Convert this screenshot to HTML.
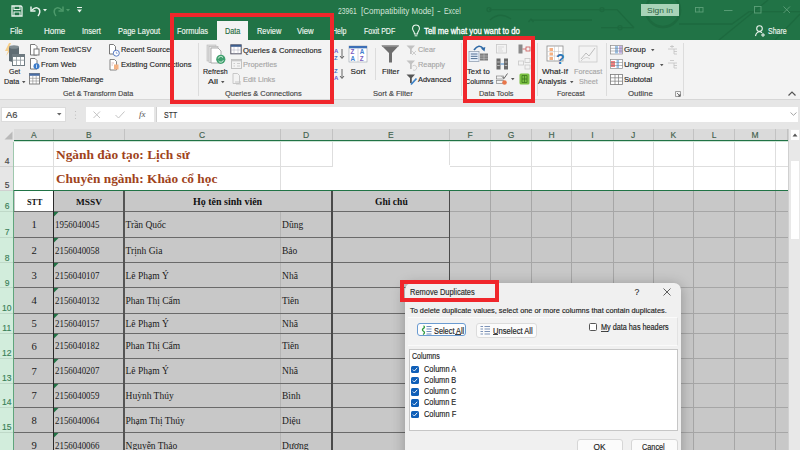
<!DOCTYPE html>
<html><head><meta charset="utf-8"><style>
html,body{margin:0;padding:0;width:800px;height:450px;overflow:hidden;background:#fff;position:relative}
</style></head><body>
<div style="position:absolute;left:0px;top:0px;width:800px;height:40px;background:#217346;"></div>
<svg style="position:absolute;left:0px;top:0px;overflow:visible" width="800" height="40" viewBox="0 0 800 40">
<g fill="none" stroke="#1d6a3f" stroke-width="1.3">
<path d="M489 9.6 H617 L634 27.7"/><circle cx="489" cy="9.6" r="2"/><circle cx="602" cy="9.6" r="2"/>
<path d="M490 20 Q500 11 511 19"/>
<path d="M531 20.2 H592"/><path d="M560 20 H592"/><path d="M528.5 22 L531 19 L533.5 22"/>
<path d="M601 27.7 H634"/><circle cx="620" cy="27.7" r="2"/>
<circle cx="663" cy="10" r="17" stroke-width="2.6"/>
<path d="M679 24 H732 L749 11.7 H800"/>
<path d="M719 40 L768 0"/><path d="M775 40 L800 14"/>
</g></svg>
<div style="position:absolute;left:217px;top:21px;width:31px;height:19px;background:#f3f3f3;"></div>
<div style="position:absolute;left:641px;top:4px;width:37.5px;height:12px;background:#a9d3b8;"></div>
<svg style="position:absolute;left:695px;top:7px;overflow:visible" width="9" height="6" viewBox="0 0 9 6"><rect x="0.5" y="0.5" width="7.5" height="4.5" fill="none" stroke="#5c9f79" stroke-width="0.9"/><path d="M4.2 0.5 V5" stroke="#5c9f79" stroke-width="0.8"/></svg>
<svg style="position:absolute;left:723.5px;top:9.5px;overflow:visible" width="9" height="2" viewBox="0 0 9 2"><path d="M0 0.5 H8.5" stroke="#5c9f79" stroke-width="0.9"/></svg>
<svg style="position:absolute;left:754px;top:6px;overflow:visible" width="8" height="8" viewBox="0 0 8 8"><rect x="0.5" y="0.5" width="6.5" height="6.5" fill="none" stroke="#5c9f79" stroke-width="0.9"/></svg>
<svg style="position:absolute;left:783px;top:6px;overflow:visible" width="8" height="8" viewBox="0 0 8 8"><path d="M0.5 0.5 L7 7 M7 0.5 L0.5 7" stroke="#5c9f79" stroke-width="0.9"/></svg>
<svg style="position:absolute;left:11px;top:5px;overflow:visible" width="12" height="12" viewBox="0 0 12 12"><path d="M1 1 H10 L11 2 V11 H1 Z" fill="none" stroke="#e8f3ec" stroke-width="1.3"/><path d="M3 1 V4.5 H9 V1" fill="none" stroke="#e8f3ec" stroke-width="1.1"/><path d="M3 11 V7 H9 V11" fill="none" stroke="#e8f3ec" stroke-width="1.1"/></svg>
<svg style="position:absolute;left:30px;top:5px;overflow:visible" width="12" height="12" viewBox="0 0 12 12"><path d="M2 5 Q6 1 9 4 Q11 7 8 11" fill="none" stroke="#e8f3ec" stroke-width="1.5"/><path d="M1 1.5 V6 H5.5" fill="none" stroke="#e8f3ec" stroke-width="1.5"/></svg>
<svg style="position:absolute;left:43px;top:9px;overflow:visible" width="4" height="3" viewBox="0 0 4 3"><path d="M0 0 H4 L2 2.5 Z" fill="#e8f3ec"/></svg>
<svg style="position:absolute;left:52px;top:5px;overflow:visible" width="12" height="12" viewBox="0 0 12 12"><path d="M10 5 Q6 1 3 4 Q1 7 4 11" fill="none" stroke="#4d9a6b" stroke-width="1.5"/><path d="M11 1.5 V6 H6.5" fill="none" stroke="#4d9a6b" stroke-width="1.5"/></svg>
<svg style="position:absolute;left:66px;top:9px;overflow:visible" width="4" height="3" viewBox="0 0 4 3"><path d="M0 0 H4 L2 2.5 Z" fill="#4d9a6b"/></svg>
<svg style="position:absolute;left:77px;top:7px;overflow:visible" width="5" height="6" viewBox="0 0 5 6"><path d="M0 0.5 H5" stroke="#e8f3ec" stroke-width="1"/><path d="M0 2.5 H5 L2.5 5.5 Z" fill="#e8f3ec"/></svg>
<svg style="position:absolute;left:411px;top:24px;overflow:visible" width="10" height="13" viewBox="0 0 10 13"><path d="M5 1 C1.5 1 0.8 4.5 2.3 6.8 C3.3 8.3 3.5 9 3.5 10 H6.5 C6.5 9 6.7 8.3 7.7 6.8 C9.2 4.5 8.5 1 5 1 Z" fill="none" stroke="#eef6f0" stroke-width="1.1"/><path d="M3.6 11.8 H6.4" stroke="#eef6f0" stroke-width="1"/></svg>
<svg style="position:absolute;left:755px;top:25px;overflow:visible" width="10" height="12" viewBox="0 0 10 12"><circle cx="4.5" cy="3.6" r="2.8" fill="none" stroke="#eef6f0" stroke-width="1.1"/><path d="M0.5 11 Q1.5 6.8 4.5 6.8 Q6 6.8 7 7.8" fill="none" stroke="#eef6f0" stroke-width="1.1"/><path d="M8 8 V12 M6 10 H10" stroke="#eef6f0" stroke-width="1"/></svg>
<div style="position:absolute;left:0px;top:40px;width:800px;height:59px;background:#f3f3f3;"></div>
<div style="position:absolute;left:0px;top:99px;width:800px;height:1px;background:#d6d6d6;"></div>
<div style="position:absolute;left:198px;top:43px;width:1px;height:53px;background:#dcdcdc;"></div>
<div style="position:absolute;left:330px;top:43px;width:1px;height:53px;background:#dcdcdc;"></div>
<div style="position:absolute;left:460.5px;top:43px;width:1px;height:53px;background:#dcdcdc;"></div>
<div style="position:absolute;left:537px;top:43px;width:1px;height:53px;background:#dcdcdc;"></div>
<div style="position:absolute;left:606.4px;top:43px;width:1px;height:53px;background:#dcdcdc;"></div>
<div style="position:absolute;left:682.6px;top:43px;width:1px;height:53px;background:#dcdcdc;"></div>
<div style="position:absolute;left:374.5px;top:48px;width:1px;height:32px;background:#dcdcdc;"></div>
<div style="position:absolute;left:0px;top:100px;width:800px;height:28.5px;background:#e6e6e6;"></div>
<div style="position:absolute;left:1px;top:106.8px;width:64.5px;height:15.2px;background:#ffffff;box-sizing:border-box;border:1px solid #dcdcdc"></div>
<div style="position:absolute;left:85.5px;top:106.8px;width:68.5px;height:15.2px;background:#ffffff;"></div>
<div style="position:absolute;left:156px;top:106.8px;width:641.7px;height:15.2px;background:#ffffff;box-sizing:border-box;border-left:1px solid #d0d0d0"></div>
<div style="position:absolute;left:0px;top:128.5px;width:787.5px;height:11.5px;background:#dadada;"></div>
<div style="position:absolute;left:0px;top:128.5px;width:14px;height:13.0px;background:#e6e6e6;"></div>
<div style="position:absolute;left:0px;top:141.5px;width:13.5px;height:24.5px;background:#e6e6e6;"></div>
<div style="position:absolute;left:0px;top:166px;width:13.5px;height:24px;background:#e6e6e6;"></div>
<div style="position:absolute;left:0px;top:190px;width:13.5px;height:21px;background:#d2eddc;"></div>
<div style="position:absolute;left:0px;top:211px;width:13.5px;height:26px;background:#d2eddc;"></div>
<div style="position:absolute;left:0px;top:237px;width:13.5px;height:25.5px;background:#d2eddc;"></div>
<div style="position:absolute;left:0px;top:262.5px;width:13.5px;height:25.0px;background:#d2eddc;"></div>
<div style="position:absolute;left:0px;top:287.5px;width:13.5px;height:25.5px;background:#d2eddc;"></div>
<div style="position:absolute;left:0px;top:313px;width:13.5px;height:20px;background:#d2eddc;"></div>
<div style="position:absolute;left:0px;top:333px;width:13.5px;height:25px;background:#d2eddc;"></div>
<div style="position:absolute;left:0px;top:358px;width:13.5px;height:25px;background:#d2eddc;"></div>
<div style="position:absolute;left:0px;top:383px;width:13.5px;height:24.30000000000001px;background:#d2eddc;"></div>
<div style="position:absolute;left:0px;top:407.3px;width:13.5px;height:25.0px;background:#d2eddc;"></div>
<div style="position:absolute;left:0px;top:432.3px;width:13.5px;height:25.19999999999999px;background:#d2eddc;"></div>
<div style="position:absolute;left:14px;top:141.5px;width:773.5px;height:48.5px;background:#ffffff;"></div>
<div style="position:absolute;left:14px;top:190px;width:773.5px;height:260px;background:#c8c8c8;"></div>
<div style="position:absolute;left:14.5px;top:190.5px;width:39px;height:20.5px;background:#ffffff;"></div>
<div style="position:absolute;left:787.5px;top:128.5px;width:12.5px;height:321.5px;background:#e8e8e8;"></div>
<div style="position:absolute;left:337.96px;top:8.29px;line-height:8.2px;white-space:nowrap;font-family:'Liberation Sans', sans-serif;font-size:8.2px;font-weight:400;color:#d2e4d8;transform:scaleX(0.8196);transform-origin:0 0;-webkit-text-stroke:0.15px currentColor;-webkit-text-stroke:0">23961</div>
<div style="position:absolute;left:360.90px;top:8.29px;line-height:8.2px;white-space:nowrap;font-family:'Liberation Sans', sans-serif;font-size:8.2px;font-weight:400;color:#d2e4d8;transform:scaleX(0.9816);transform-origin:0 0;-webkit-text-stroke:0.15px currentColor;-webkit-text-stroke:0">[Compatibility Mode]</div>
<div style="position:absolute;left:437.24px;top:8.29px;line-height:8.2px;white-space:nowrap;font-family:'Liberation Sans', sans-serif;font-size:8.2px;font-weight:400;color:#d2e4d8;transform:scaleX(1.3581);transform-origin:0 0;-webkit-text-stroke:0.15px currentColor;-webkit-text-stroke:0">-</div>
<div style="position:absolute;left:444.16px;top:8.29px;line-height:8.2px;white-space:nowrap;font-family:'Liberation Sans', sans-serif;font-size:8.2px;font-weight:400;color:#d2e4d8;transform:scaleX(0.8328);transform-origin:0 0;-webkit-text-stroke:0.15px currentColor;-webkit-text-stroke:0">Excel</div>
<div style="position:absolute;left:646.58px;top:6.54px;line-height:8.1px;white-space:nowrap;font-family:'Liberation Sans', sans-serif;font-size:8.1px;font-weight:400;color:#2a5f40;transform:scaleX(1.0443);transform-origin:0 0;-webkit-text-stroke:0.15px currentColor;-webkit-text-stroke:0">Sign in</div>
<div style="position:absolute;left:10.21px;top:28.29px;line-height:8.2px;white-space:nowrap;font-family:'Liberation Sans', sans-serif;font-size:8.2px;font-weight:400;color:#eef6f0;transform:scaleX(0.9448);transform-origin:0 0;-webkit-text-stroke:0.15px currentColor;">File</div>
<div style="position:absolute;left:44.40px;top:28.29px;line-height:8.2px;white-space:nowrap;font-family:'Liberation Sans', sans-serif;font-size:8.2px;font-weight:400;color:#eef6f0;transform:scaleX(0.9751);transform-origin:0 0;-webkit-text-stroke:0.15px currentColor;">Home</div>
<div style="position:absolute;left:82.12px;top:28.29px;line-height:8.2px;white-space:nowrap;font-family:'Liberation Sans', sans-serif;font-size:8.2px;font-weight:400;color:#eef6f0;transform:scaleX(0.9154);transform-origin:0 0;-webkit-text-stroke:0.15px currentColor;">Insert</div>
<div style="position:absolute;left:117.63px;top:28.29px;line-height:8.2px;white-space:nowrap;font-family:'Liberation Sans', sans-serif;font-size:8.2px;font-weight:400;color:#eef6f0;transform:scaleX(0.9144);transform-origin:0 0;-webkit-text-stroke:0.15px currentColor;">Page Layout</div>
<div style="position:absolute;left:176.63px;top:28.29px;line-height:8.2px;white-space:nowrap;font-family:'Liberation Sans', sans-serif;font-size:8.2px;font-weight:400;color:#eef6f0;transform:scaleX(0.9098);transform-origin:0 0;-webkit-text-stroke:0.15px currentColor;">Formulas</div>
<div style="position:absolute;left:224.64px;top:28.29px;line-height:8.2px;white-space:nowrap;font-family:'Liberation Sans', sans-serif;font-size:8.2px;font-weight:400;color:#1e6b40;transform:scaleX(0.8861);transform-origin:0 0;-webkit-text-stroke:0.15px currentColor;">Data</div>
<div style="position:absolute;left:256.63px;top:28.29px;line-height:8.2px;white-space:nowrap;font-family:'Liberation Sans', sans-serif;font-size:8.2px;font-weight:400;color:#eef6f0;transform:scaleX(0.9025);transform-origin:0 0;-webkit-text-stroke:0.15px currentColor;">Review</div>
<div style="position:absolute;left:297.11px;top:28.29px;line-height:8.2px;white-space:nowrap;font-family:'Liberation Sans', sans-serif;font-size:8.2px;font-weight:400;color:#eef6f0;transform:scaleX(0.9411);transform-origin:0 0;-webkit-text-stroke:0.15px currentColor;">View</div>
<div style="position:absolute;left:332.15px;top:28.29px;line-height:8.2px;white-space:nowrap;font-family:'Liberation Sans', sans-serif;font-size:8.2px;font-weight:400;color:#eef6f0;transform:scaleX(0.8612);transform-origin:0 0;-webkit-text-stroke:0.15px currentColor;">Help</div>
<div style="position:absolute;left:363.65px;top:28.29px;line-height:8.2px;white-space:nowrap;font-family:'Liberation Sans', sans-serif;font-size:8.2px;font-weight:400;color:#eef6f0;transform:scaleX(0.8571);transform-origin:0 0;-webkit-text-stroke:0.15px currentColor;">Foxit PDF</div>
<div style="position:absolute;left:423.61px;top:28.29px;line-height:8.2px;white-space:nowrap;font-family:'Liberation Sans', sans-serif;font-size:8.2px;font-weight:400;color:#ffffff;transform:scaleX(0.9480);transform-origin:0 0;-webkit-text-stroke:0.15px currentColor;-webkit-text-stroke:0.3px #fff">Tell me what you want to do</div>
<div style="position:absolute;left:767.65px;top:28.29px;line-height:8.2px;white-space:nowrap;font-family:'Liberation Sans', sans-serif;font-size:8.2px;font-weight:400;color:#eef6f0;transform:scaleX(0.8555);transform-origin:0 0;-webkit-text-stroke:0.15px currentColor;">Share</div>
<div style="position:absolute;left:62.64px;top:90.34px;line-height:8.1px;white-space:nowrap;font-family:'Liberation Sans', sans-serif;font-size:8.1px;font-weight:400;color:#444444;transform:scaleX(0.8921);transform-origin:0 0;-webkit-text-stroke:0.15px currentColor;">Get &amp; Transform Data</div>
<div style="position:absolute;left:224.63px;top:90.34px;line-height:8.1px;white-space:nowrap;font-family:'Liberation Sans', sans-serif;font-size:8.1px;font-weight:400;color:#444444;transform:scaleX(0.9221);transform-origin:0 0;-webkit-text-stroke:0.15px currentColor;">Queries &amp; Connections</div>
<div style="position:absolute;left:373.42px;top:90.34px;line-height:8.1px;white-space:nowrap;font-family:'Liberation Sans', sans-serif;font-size:8.1px;font-weight:400;color:#444444;transform:scaleX(0.9302);transform-origin:0 0;-webkit-text-stroke:0.15px currentColor;">Sort &amp; Filter</div>
<div style="position:absolute;left:479.23px;top:90.34px;line-height:8.1px;white-space:nowrap;font-family:'Liberation Sans', sans-serif;font-size:8.1px;font-weight:400;color:#444444;transform:scaleX(0.9066);transform-origin:0 0;-webkit-text-stroke:0.15px currentColor;">Data Tools</div>
<div style="position:absolute;left:556.84px;top:90.34px;line-height:8.1px;white-space:nowrap;font-family:'Liberation Sans', sans-serif;font-size:8.1px;font-weight:400;color:#444444;transform:scaleX(0.8798);transform-origin:0 0;-webkit-text-stroke:0.15px currentColor;">Forecast</div>
<div style="position:absolute;left:627.61px;top:90.34px;line-height:8.1px;white-space:nowrap;font-family:'Liberation Sans', sans-serif;font-size:8.1px;font-weight:400;color:#444444;transform:scaleX(0.9659);transform-origin:0 0;-webkit-text-stroke:0.15px currentColor;">Outline</div>
<div style="position:absolute;left:8.65px;top:67.84px;line-height:8.1px;white-space:nowrap;font-family:'Liberation Sans', sans-serif;font-size:8.1px;font-weight:400;color:#262626;transform:scaleX(0.8581);transform-origin:0 0;-webkit-text-stroke:0.15px currentColor;">Get</div>
<div style="position:absolute;left:4.14px;top:78.14px;line-height:8.1px;white-space:nowrap;font-family:'Liberation Sans', sans-serif;font-size:8.1px;font-weight:400;color:#262626;transform:scaleX(0.8896);transform-origin:0 0;-webkit-text-stroke:0.15px currentColor;">Data</div>
<div style="position:absolute;left:40.63px;top:46.34px;line-height:8.1px;white-space:nowrap;font-family:'Liberation Sans', sans-serif;font-size:8.1px;font-weight:400;color:#262626;transform:scaleX(0.9217);transform-origin:0 0;-webkit-text-stroke:0.15px currentColor;">From Text/CSV</div>
<div style="position:absolute;left:40.62px;top:61.05px;line-height:8.1px;white-space:nowrap;font-family:'Liberation Sans', sans-serif;font-size:8.1px;font-weight:400;color:#262626;transform:scaleX(0.9367);transform-origin:0 0;-webkit-text-stroke:0.15px currentColor;">From Web</div>
<div style="position:absolute;left:40.62px;top:75.55px;line-height:8.1px;white-space:nowrap;font-family:'Liberation Sans', sans-serif;font-size:8.1px;font-weight:400;color:#262626;transform:scaleX(0.9402);transform-origin:0 0;-webkit-text-stroke:0.15px currentColor;">From Table/Range</div>
<div style="position:absolute;left:120.63px;top:46.34px;line-height:8.1px;white-space:nowrap;font-family:'Liberation Sans', sans-serif;font-size:8.1px;font-weight:400;color:#262626;transform:scaleX(0.9158);transform-origin:0 0;-webkit-text-stroke:0.15px currentColor;">Recent Sources</div>
<div style="position:absolute;left:120.62px;top:61.05px;line-height:8.1px;white-space:nowrap;font-family:'Liberation Sans', sans-serif;font-size:8.1px;font-weight:400;color:#262626;transform:scaleX(0.9320);transform-origin:0 0;-webkit-text-stroke:0.15px currentColor;">Existing Connections</div>
<div style="position:absolute;left:202.65px;top:67.64px;line-height:8.1px;white-space:nowrap;font-family:'Liberation Sans', sans-serif;font-size:8.1px;font-weight:400;color:#262626;transform:scaleX(0.8717);transform-origin:0 0;-webkit-text-stroke:0.15px currentColor;">Refresh</div>
<div style="position:absolute;left:207.55px;top:78.14px;line-height:8.1px;white-space:nowrap;font-family:'Liberation Sans', sans-serif;font-size:8.1px;font-weight:400;color:#262626;transform:scaleX(1.0989);transform-origin:0 0;-webkit-text-stroke:0.15px currentColor;">All</div>
<div style="position:absolute;left:242.62px;top:46.64px;line-height:8.1px;white-space:nowrap;font-family:'Liberation Sans', sans-serif;font-size:8.1px;font-weight:400;color:#262626;transform:scaleX(0.9427);transform-origin:0 0;-webkit-text-stroke:0.15px currentColor;">Queries &amp; Connections</div>
<div style="position:absolute;left:242.63px;top:60.94px;line-height:8.1px;white-space:nowrap;font-family:'Liberation Sans', sans-serif;font-size:8.1px;font-weight:400;color:#a6a6a6;transform:scaleX(0.9229);transform-origin:0 0;-webkit-text-stroke:0.15px currentColor;">Properties</div>
<div style="position:absolute;left:242.63px;top:75.84px;line-height:8.1px;white-space:nowrap;font-family:'Liberation Sans', sans-serif;font-size:8.1px;font-weight:400;color:#a6a6a6;transform:scaleX(0.9188);transform-origin:0 0;-webkit-text-stroke:0.15px currentColor;">Edit Links</div>
<div style="position:absolute;left:350.60px;top:67.94px;line-height:8.1px;white-space:nowrap;font-family:'Liberation Sans', sans-serif;font-size:8.1px;font-weight:400;color:#262626;-webkit-text-stroke:0.15px currentColor;">Sort</div>
<div style="position:absolute;left:382.16px;top:67.94px;line-height:8.1px;white-space:nowrap;font-family:'Liberation Sans', sans-serif;font-size:8.1px;font-weight:400;color:#262626;transform:scaleX(0.9599);transform-origin:0 0;-webkit-text-stroke:0.15px currentColor;">Filter</div>
<div style="position:absolute;left:418.04px;top:46.34px;line-height:8.1px;white-space:nowrap;font-family:'Liberation Sans', sans-serif;font-size:8.1px;font-weight:400;color:#a6a6a6;transform:scaleX(0.8957);transform-origin:0 0;-webkit-text-stroke:0.15px currentColor;">Clear</div>
<div style="position:absolute;left:418.03px;top:61.44px;line-height:8.1px;white-space:nowrap;font-family:'Liberation Sans', sans-serif;font-size:8.1px;font-weight:400;color:#a6a6a6;transform:scaleX(0.9103);transform-origin:0 0;-webkit-text-stroke:0.15px currentColor;">Reapply</div>
<div style="position:absolute;left:418.03px;top:75.84px;line-height:8.1px;white-space:nowrap;font-family:'Liberation Sans', sans-serif;font-size:8.1px;font-weight:400;color:#262626;transform:scaleX(0.9207);transform-origin:0 0;-webkit-text-stroke:0.15px currentColor;">Advanced</div>
<div style="position:absolute;left:467.11px;top:67.64px;line-height:8.1px;white-space:nowrap;font-family:'Liberation Sans', sans-serif;font-size:8.1px;font-weight:400;color:#262626;transform:scaleX(0.9551);transform-origin:0 0;-webkit-text-stroke:0.15px currentColor;">Text to</div>
<div style="position:absolute;left:465.14px;top:78.14px;line-height:8.1px;white-space:nowrap;font-family:'Liberation Sans', sans-serif;font-size:8.1px;font-weight:400;color:#262626;transform:scaleX(0.8835);transform-origin:0 0;-webkit-text-stroke:0.15px currentColor;">Columns</div>
<div style="position:absolute;left:541.89px;top:67.64px;line-height:8.1px;white-space:nowrap;font-family:'Liberation Sans', sans-serif;font-size:8.1px;font-weight:400;color:#262626;-webkit-text-stroke:0.15px currentColor;">What-If</div>
<div style="position:absolute;left:538.42px;top:78.14px;line-height:8.1px;white-space:nowrap;font-family:'Liberation Sans', sans-serif;font-size:8.1px;font-weight:400;color:#262626;transform:scaleX(0.9376);transform-origin:0 0;-webkit-text-stroke:0.15px currentColor;">Analysis</div>
<div style="position:absolute;left:574.14px;top:67.64px;line-height:8.1px;white-space:nowrap;font-family:'Liberation Sans', sans-serif;font-size:8.1px;font-weight:400;color:#a6a6a6;transform:scaleX(0.8961);transform-origin:0 0;-webkit-text-stroke:0.15px currentColor;">Forecast</div>
<div style="position:absolute;left:579.14px;top:78.14px;line-height:8.1px;white-space:nowrap;font-family:'Liberation Sans', sans-serif;font-size:8.1px;font-weight:400;color:#a6a6a6;transform:scaleX(0.8847);transform-origin:0 0;-webkit-text-stroke:0.15px currentColor;">Sheet</div>
<div style="position:absolute;left:623.61px;top:46.34px;line-height:8.1px;white-space:nowrap;font-family:'Liberation Sans', sans-serif;font-size:8.1px;font-weight:400;color:#262626;transform:scaleX(0.9682);transform-origin:0 0;-webkit-text-stroke:0.15px currentColor;">Group</div>
<div style="position:absolute;left:623.60px;top:60.94px;line-height:8.1px;white-space:nowrap;font-family:'Liberation Sans', sans-serif;font-size:8.1px;font-weight:400;color:#262626;transform:scaleX(0.9817);transform-origin:0 0;-webkit-text-stroke:0.15px currentColor;">Ungroup</div>
<div style="position:absolute;left:623.62px;top:75.55px;line-height:8.1px;white-space:nowrap;font-family:'Liberation Sans', sans-serif;font-size:8.1px;font-weight:400;color:#262626;transform:scaleX(0.9483);transform-origin:0 0;-webkit-text-stroke:0.15px currentColor;">Subtotal</div>
<svg style="position:absolute;left:57px;top:113px;overflow:visible" width="5" height="3" viewBox="0 0 5 3"><path d="M0 0 H4.5 L2.25 2.6 Z" fill="#666"/></svg>
<svg style="position:absolute;left:74px;top:110px;overflow:visible" width="3" height="10" viewBox="0 0 3 10"><circle cx="1.5" cy="1.5" r="0.6" fill="#bbb"/><circle cx="1.5" cy="5" r="0.6" fill="#bbb"/><circle cx="1.5" cy="8.5" r="0.6" fill="#bbb"/></svg>
<svg style="position:absolute;left:93px;top:111px;overflow:visible" width="8" height="8" viewBox="0 0 8 8"><path d="M0.5 0.5 L7 7 M7 0.5 L0.5 7" stroke="#c4c4c4" stroke-width="1"/></svg>
<svg style="position:absolute;left:115px;top:111px;overflow:visible" width="10" height="8" viewBox="0 0 10 8"><path d="M0.5 4 L3.5 7 L9.5 0.5" stroke="#c4c4c4" stroke-width="1" fill="none"/></svg>
<svg style="position:absolute;left:790px;top:112px;overflow:visible" width="7" height="4" viewBox="0 0 7 4"><path d="M0.5 0.5 L3.5 3.3 L6.5 0.5" stroke="#9a9a9a" stroke-width="0.9" fill="none"/></svg>
<svg style="position:absolute;left:4px;top:131px;overflow:visible" width="9" height="9" viewBox="0 0 9 9"><path d="M8.5 0.5 V8.5 H0.5 Z" fill="#b9b9b9"/></svg>
<div style="position:absolute;left:53.0px;top:128.5px;width:1px;height:11.5px;background:#c2c2c2;"></div>
<div style="position:absolute;left:123.5px;top:128.5px;width:1px;height:11.5px;background:#c2c2c2;"></div>
<div style="position:absolute;left:279.75px;top:128.5px;width:1px;height:11.5px;background:#c2c2c2;"></div>
<div style="position:absolute;left:331.5px;top:128.5px;width:1px;height:11.5px;background:#c2c2c2;"></div>
<div style="position:absolute;left:449.0px;top:128.5px;width:1px;height:11.5px;background:#c2c2c2;"></div>
<div style="position:absolute;left:490.2px;top:128.5px;width:1px;height:11.5px;background:#c2c2c2;"></div>
<div style="position:absolute;left:530.7px;top:128.5px;width:1px;height:11.5px;background:#c2c2c2;"></div>
<div style="position:absolute;left:571.25px;top:128.5px;width:1px;height:11.5px;background:#c2c2c2;"></div>
<div style="position:absolute;left:612.5px;top:128.5px;width:1px;height:11.5px;background:#c2c2c2;"></div>
<div style="position:absolute;left:652.7px;top:128.5px;width:1px;height:11.5px;background:#c2c2c2;"></div>
<div style="position:absolute;left:693.2px;top:128.5px;width:1px;height:11.5px;background:#c2c2c2;"></div>
<div style="position:absolute;left:734.1px;top:128.5px;width:1px;height:11.5px;background:#c2c2c2;"></div>
<div style="position:absolute;left:775.0px;top:128.5px;width:1px;height:11.5px;background:#c2c2c2;"></div>
<div style="position:absolute;left:787.0px;top:128.5px;width:1px;height:11.5px;background:#c2c2c2;"></div>
<div style="position:absolute;left:14px;top:140px;width:773.5px;height:2px;background:#217346;"></div>
<div style="position:absolute;left:0px;top:165.5px;width:13.5px;height:1px;background:#d0d0d0;"></div>
<div style="position:absolute;left:0px;top:189.5px;width:13.5px;height:1px;background:#d0d0d0;"></div>
<div style="position:absolute;left:0px;top:210.5px;width:13.5px;height:1px;background:#bfd9c8;"></div>
<div style="position:absolute;left:0px;top:236.5px;width:13.5px;height:1px;background:#bfd9c8;"></div>
<div style="position:absolute;left:0px;top:262.0px;width:13.5px;height:1px;background:#bfd9c8;"></div>
<div style="position:absolute;left:0px;top:287.0px;width:13.5px;height:1px;background:#bfd9c8;"></div>
<div style="position:absolute;left:0px;top:312.5px;width:13.5px;height:1px;background:#bfd9c8;"></div>
<div style="position:absolute;left:0px;top:332.5px;width:13.5px;height:1px;background:#bfd9c8;"></div>
<div style="position:absolute;left:0px;top:357.5px;width:13.5px;height:1px;background:#bfd9c8;"></div>
<div style="position:absolute;left:0px;top:382.5px;width:13.5px;height:1px;background:#bfd9c8;"></div>
<div style="position:absolute;left:0px;top:406.8px;width:13.5px;height:1px;background:#bfd9c8;"></div>
<div style="position:absolute;left:0px;top:431.8px;width:13.5px;height:1px;background:#bfd9c8;"></div>
<div style="position:absolute;left:0px;top:457.0px;width:13.5px;height:1px;background:#bfd9c8;"></div>
<div style="position:absolute;left:13px;top:141.5px;width:1.3px;height:308.5px;background:#9fc8ae;"></div>
<div style="position:absolute;left:12.8px;top:190px;width:1.6px;height:260px;background:#5fa57c;"></div>
<div style="position:absolute;left:279.75px;top:141.5px;width:1px;height:48.5px;background:#dedede;"></div>
<div style="position:absolute;left:331.5px;top:141.5px;width:1px;height:48.5px;background:#dedede;"></div>
<div style="position:absolute;left:449.0px;top:141.5px;width:1px;height:48.5px;background:#dedede;"></div>
<div style="position:absolute;left:490.2px;top:141.5px;width:1px;height:48.5px;background:#dedede;"></div>
<div style="position:absolute;left:530.7px;top:141.5px;width:1px;height:48.5px;background:#dedede;"></div>
<div style="position:absolute;left:571.25px;top:141.5px;width:1px;height:48.5px;background:#dedede;"></div>
<div style="position:absolute;left:612.5px;top:141.5px;width:1px;height:48.5px;background:#dedede;"></div>
<div style="position:absolute;left:652.7px;top:141.5px;width:1px;height:48.5px;background:#dedede;"></div>
<div style="position:absolute;left:693.2px;top:141.5px;width:1px;height:48.5px;background:#dedede;"></div>
<div style="position:absolute;left:734.1px;top:141.5px;width:1px;height:48.5px;background:#dedede;"></div>
<div style="position:absolute;left:775.0px;top:141.5px;width:1px;height:48.5px;background:#dedede;"></div>
<div style="position:absolute;left:53px;top:141.5px;width:1px;height:48.5px;background:#dedede;"></div>
<div style="position:absolute;left:14px;top:165.5px;width:773.5px;height:1px;background:#dedede;"></div>
<div style="position:absolute;left:54px;top:142px;width:226px;height:23.5px;background:#ffffff;"></div>
<div style="position:absolute;left:54px;top:166.5px;width:226px;height:23.5px;background:#ffffff;"></div>
<div style="position:absolute;left:331px;top:166.5px;width:159px;height:23.5px;background:#ffffff;"></div>
<div style="position:absolute;left:332.5px;top:165px;width:117px;height:2px;background:#ffffff;"></div>
<div style="position:absolute;left:449.0px;top:190px;width:1px;height:260px;background:#a6a6a6;"></div>
<div style="position:absolute;left:490.2px;top:190px;width:1px;height:260px;background:#a6a6a6;"></div>
<div style="position:absolute;left:530.7px;top:190px;width:1px;height:260px;background:#a6a6a6;"></div>
<div style="position:absolute;left:571.25px;top:190px;width:1px;height:260px;background:#a6a6a6;"></div>
<div style="position:absolute;left:612.5px;top:190px;width:1px;height:260px;background:#a6a6a6;"></div>
<div style="position:absolute;left:652.7px;top:190px;width:1px;height:260px;background:#a6a6a6;"></div>
<div style="position:absolute;left:693.2px;top:190px;width:1px;height:260px;background:#a6a6a6;"></div>
<div style="position:absolute;left:734.1px;top:190px;width:1px;height:260px;background:#a6a6a6;"></div>
<div style="position:absolute;left:775.0px;top:190px;width:1px;height:260px;background:#a6a6a6;"></div>
<div style="position:absolute;left:449.5px;top:210.5px;width:338px;height:1px;background:#a6a6a6;"></div>
<div style="position:absolute;left:449.5px;top:236.5px;width:338px;height:1px;background:#a6a6a6;"></div>
<div style="position:absolute;left:449.5px;top:262.0px;width:338px;height:1px;background:#a6a6a6;"></div>
<div style="position:absolute;left:449.5px;top:287.0px;width:338px;height:1px;background:#a6a6a6;"></div>
<div style="position:absolute;left:449.5px;top:312.5px;width:338px;height:1px;background:#a6a6a6;"></div>
<div style="position:absolute;left:449.5px;top:332.5px;width:338px;height:1px;background:#a6a6a6;"></div>
<div style="position:absolute;left:449.5px;top:357.5px;width:338px;height:1px;background:#a6a6a6;"></div>
<div style="position:absolute;left:449.5px;top:382.5px;width:338px;height:1px;background:#a6a6a6;"></div>
<div style="position:absolute;left:449.5px;top:406.8px;width:338px;height:1px;background:#a6a6a6;"></div>
<div style="position:absolute;left:449.5px;top:431.8px;width:338px;height:1px;background:#a6a6a6;"></div>
<div style="position:absolute;left:280px;top:211px;width:0.8px;height:240px;background:#b4b4b4;"></div>
<div style="position:absolute;left:14px;top:210.5px;width:436px;height:1px;background:#6a6a6a;"></div>
<div style="position:absolute;left:14px;top:236.5px;width:436px;height:1px;background:#6a6a6a;"></div>
<div style="position:absolute;left:14px;top:262.0px;width:436px;height:1px;background:#6a6a6a;"></div>
<div style="position:absolute;left:14px;top:287.0px;width:436px;height:1px;background:#6a6a6a;"></div>
<div style="position:absolute;left:14px;top:312.5px;width:436px;height:1px;background:#6a6a6a;"></div>
<div style="position:absolute;left:14px;top:332.5px;width:436px;height:1px;background:#6a6a6a;"></div>
<div style="position:absolute;left:14px;top:357.5px;width:436px;height:1px;background:#6a6a6a;"></div>
<div style="position:absolute;left:14px;top:382.5px;width:436px;height:1px;background:#6a6a6a;"></div>
<div style="position:absolute;left:14px;top:406.8px;width:436px;height:1px;background:#6a6a6a;"></div>
<div style="position:absolute;left:14px;top:431.8px;width:436px;height:1px;background:#6a6a6a;"></div>
<div style="position:absolute;left:52.9px;top:190px;width:1.4px;height:260px;background:#2a2a2a;"></div>
<div style="position:absolute;left:123.4px;top:190px;width:1.2px;height:260px;background:#555;"></div>
<div style="position:absolute;left:331.4px;top:190px;width:1.6px;height:260px;background:#4a4a4a;"></div>
<div style="position:absolute;left:448.9px;top:190px;width:1.4px;height:260px;background:#4a4a4a;"></div>
<div style="position:absolute;left:14px;top:189.5px;width:773.5px;height:1.6px;background:#217346;"></div>
<div style="position:absolute;left:14px;top:141px;width:773.5px;height:1px;background:#cfe4d6;"></div>
<svg style="position:absolute;left:54px;top:211.5px;overflow:visible" width="5" height="5" viewBox="0 0 5 5"><path d="M0 0 H4.5 L0 4.5 Z" fill="#217346"/></svg>
<svg style="position:absolute;left:54px;top:237.5px;overflow:visible" width="5" height="5" viewBox="0 0 5 5"><path d="M0 0 H4.5 L0 4.5 Z" fill="#217346"/></svg>
<svg style="position:absolute;left:54px;top:263.0px;overflow:visible" width="5" height="5" viewBox="0 0 5 5"><path d="M0 0 H4.5 L0 4.5 Z" fill="#217346"/></svg>
<svg style="position:absolute;left:54px;top:288.0px;overflow:visible" width="5" height="5" viewBox="0 0 5 5"><path d="M0 0 H4.5 L0 4.5 Z" fill="#217346"/></svg>
<svg style="position:absolute;left:54px;top:313.5px;overflow:visible" width="5" height="5" viewBox="0 0 5 5"><path d="M0 0 H4.5 L0 4.5 Z" fill="#217346"/></svg>
<svg style="position:absolute;left:54px;top:333.5px;overflow:visible" width="5" height="5" viewBox="0 0 5 5"><path d="M0 0 H4.5 L0 4.5 Z" fill="#217346"/></svg>
<svg style="position:absolute;left:54px;top:358.5px;overflow:visible" width="5" height="5" viewBox="0 0 5 5"><path d="M0 0 H4.5 L0 4.5 Z" fill="#217346"/></svg>
<svg style="position:absolute;left:54px;top:383.5px;overflow:visible" width="5" height="5" viewBox="0 0 5 5"><path d="M0 0 H4.5 L0 4.5 Z" fill="#217346"/></svg>
<svg style="position:absolute;left:54px;top:407.8px;overflow:visible" width="5" height="5" viewBox="0 0 5 5"><path d="M0 0 H4.5 L0 4.5 Z" fill="#217346"/></svg>
<svg style="position:absolute;left:54px;top:432.8px;overflow:visible" width="5" height="5" viewBox="0 0 5 5"><path d="M0 0 H4.5 L0 4.5 Z" fill="#217346"/></svg>
<div style="position:absolute;left:787.5px;top:128.5px;width:0.8px;height:321.5px;background:#d0d0d0;"></div>
<div style="position:absolute;left:790.5px;top:130px;width:8px;height:9.5px;background:#ffffff;"></div>
<svg style="position:absolute;left:791.5px;top:132.5px;overflow:visible" width="6" height="4" viewBox="0 0 6 4"><path d="M0.5 3.5 L3 0.5 L5.5 3.5 Z" fill="#555"/></svg>
<div style="position:absolute;left:790.5px;top:161px;width:8px;height:78px;background:#ffffff;"></div>
<svg style="position:absolute;left:22px;top:81px;overflow:visible" width="4" height="3" viewBox="0 0 4 3"><path d="M0 0 H3.5 L1.75 2.2 Z" fill="#555"/></svg>
<svg style="position:absolute;left:220.5px;top:81px;overflow:visible" width="4" height="3" viewBox="0 0 4 3"><path d="M0 0 H3.5 L1.75 2.2 Z" fill="#555"/></svg>
<svg style="position:absolute;left:511px;top:78px;overflow:visible" width="4" height="3" viewBox="0 0 4 3"><path d="M0 0 H3.5 L1.75 2.2 Z" fill="#555"/></svg>
<svg style="position:absolute;left:569.5px;top:81px;overflow:visible" width="4" height="3" viewBox="0 0 4 3"><path d="M0 0 H3.5 L1.75 2.2 Z" fill="#555"/></svg>
<svg style="position:absolute;left:651px;top:49px;overflow:visible" width="4" height="3" viewBox="0 0 4 3"><path d="M0 0 H3.5 L1.75 2.2 Z" fill="#555"/></svg>
<svg style="position:absolute;left:660px;top:63.5px;overflow:visible" width="4" height="3" viewBox="0 0 4 3"><path d="M0 0 H3.5 L1.75 2.2 Z" fill="#555"/></svg>
<svg style="position:absolute;left:675px;top:91px;overflow:visible" width="6" height="6" viewBox="0 0 6 6"><path d="M0.5 0.5 H5.5 V5.5 H0.5 Z" fill="none" stroke="#888" stroke-width="0.8"/><path d="M2 2 L5 5 M5 3 V5 H3" stroke="#555" stroke-width="0.8" fill="none"/></svg>
<svg style="position:absolute;left:788px;top:91px;overflow:visible" width="8" height="5" viewBox="0 0 8 5"><path d="M0.5 4.5 L4 1 L7.5 4.5" fill="none" stroke="#555" stroke-width="1.2"/></svg>
<svg style="position:absolute;left:3px;top:42px;overflow:visible" width="23" height="25" viewBox="0 0 23 25">
<path d="M6 1 L2 9 L5 9 L3 14 L9 6 L6 6 L8 1 Z" fill="#f7cf8a"/>
<path d="M6 5 Q11 3 16 5 V19 Q11 21 6 19 Z" fill="#5f6c73"/>
<ellipse cx="11" cy="5" rx="5" ry="1.8" fill="#818d93"/>
<rect x="9.5" y="12.5" width="12" height="11" fill="#fff" stroke="#6f7b81" stroke-width="1"/>
<rect x="9.5" y="12.5" width="12" height="2.5" fill="#6f7b81"/>
<path d="M9.5 18.2 H21.5 M13.5 15 V23.5 M17.5 15 V23.5" stroke="#8d979c" stroke-width="0.8"/>
</svg>
<svg style="position:absolute;left:29px;top:44px;overflow:visible" width="11" height="12" viewBox="0 0 11 12"><path d="M1.5 0.5 H6 L8 2.5 V11 H1.5 Z" fill="#fff" stroke="#6a6a6a" stroke-width="0.9"/><rect x="5" y="5" width="5" height="6" fill="#fff" stroke="#6a6a6a" stroke-width="0.9"/></svg>
<svg style="position:absolute;left:29px;top:58px;overflow:visible" width="11" height="12" viewBox="0 0 11 12"><path d="M1.5 0.5 H6 L8 2.5 V11 H1.5 Z" fill="#fff" stroke="#6a6a6a" stroke-width="0.9"/><circle cx="7.5" cy="8.3" r="3" fill="#3d7cc9"/><path d="M7.5 6.5 V10" stroke="#fff" stroke-width="0.7"/></svg>
<svg style="position:absolute;left:29px;top:73px;overflow:visible" width="11" height="12" viewBox="0 0 11 12"><rect x="0.5" y="0.5" width="10" height="10.5" fill="#fff" stroke="#777" stroke-width="0.9"/><rect x="0.5" y="0.5" width="10" height="2.3" fill="#4a6ea6"/><path d="M0.5 5.3 H10.5 M0.5 8 H10.5 M3.8 2.8 V11 M7.2 2.8 V11" stroke="#8a8a8a" stroke-width="0.6"/></svg>
<svg style="position:absolute;left:108px;top:44px;overflow:visible" width="12" height="13" viewBox="0 0 12 13"><path d="M1.5 0.5 H5.5 L7.5 2.5 V10 H1.5 Z" fill="#fff" stroke="#6a6a6a" stroke-width="0.9"/><circle cx="8.3" cy="9.2" r="3" fill="#fff" stroke="#4a6fbf" stroke-width="0.9"/><path d="M8.3 7.7 V9.3 H9.5" stroke="#4a6fbf" stroke-width="0.6" fill="none"/></svg>
<svg style="position:absolute;left:109px;top:59px;overflow:visible" width="11" height="12" viewBox="0 0 11 12"><path d="M1 0.5 H5.5 L7.5 2.5 V11 H1 Z" fill="#fff" stroke="#777" stroke-width="0.9"/><rect x="5" y="5.5" width="4.5" height="5" fill="#f4b183"/><path d="M2.5 4 H5 M2.5 6 H4" stroke="#c89090" stroke-width="0.6"/></svg>
<svg style="position:absolute;left:205px;top:44px;overflow:visible" width="22" height="21" viewBox="0 0 22 21">
<rect x="2" y="1" width="9" height="16" fill="#dcdcdc" stroke="#b8b8b8" stroke-width="0.6"/>
<rect x="4" y="2.5" width="9" height="16" fill="#e8e8e8" stroke="#b0b0b0" stroke-width="0.6"/>
<path d="M6 4 H13 L16 7 V19 H6 Z" fill="#fff" stroke="#9a9a9a" stroke-width="0.8"/>
<circle cx="15.8" cy="15.3" r="4.6" fill="#40a06e"/>
<path d="M13.3 14.5 A2.6 2.6 0 0 1 18 13.6 M18.3 16.2 A2.6 2.6 0 0 1 13.6 17" stroke="#d5f0df" stroke-width="1" fill="none"/>
</svg>
<svg style="position:absolute;left:230px;top:44px;overflow:visible" width="12" height="11" viewBox="0 0 12 11"><rect x="0.8" y="0.8" width="10.4" height="9" fill="#fff" stroke="#556" stroke-width="1"/><rect x="0.8" y="0.8" width="10.4" height="2" fill="#3d5e8e"/><path d="M4 3 V9.5 M8 3 V9.5 M1 6 H11" stroke="#aab" stroke-width="0.5"/></svg>
<svg style="position:absolute;left:231px;top:59px;overflow:visible" width="11" height="10" viewBox="0 0 11 10"><rect x="0.5" y="0.5" width="10" height="9" fill="none" stroke="#bdbdbd" stroke-width="0.9"/><rect x="0.5" y="0.5" width="10" height="1.8" fill="#c8c8c8"/><path d="M2.5 4.5 H4 M6 4.5 H9 M2.5 7 H4 M6 7 H9" stroke="#c3c3c3" stroke-width="0.8"/></svg>
<svg style="position:absolute;left:232px;top:73px;overflow:visible" width="10" height="12" viewBox="0 0 10 12"><path d="M1 0.5 H5.5 L7.5 2.5 V10.5 H1 Z" fill="none" stroke="#c3c3c3" stroke-width="0.9"/><path d="M3 9 H9 M4 11 H9" stroke="#c3c3c3" stroke-width="0.9"/></svg>
<svg style="position:absolute;left:334px;top:47px;overflow:visible" width="10" height="14" viewBox="0 0 10 14"><text x="0" y="6" font-family="Liberation Sans" font-size="6" font-weight="700" fill="#6a5acd">A</text><text x="0" y="12.5" font-family="Liberation Sans" font-size="6" font-weight="700" fill="#4472c4">Z</text><path d="M8 2 V11 M6 9 L8 11.5 L10 9" stroke="#555" stroke-width="0.9" fill="none"/></svg>
<svg style="position:absolute;left:334px;top:67px;overflow:visible" width="10" height="14" viewBox="0 0 10 14"><text x="0" y="6" font-family="Liberation Sans" font-size="6" font-weight="700" fill="#4472c4">Z</text><text x="0" y="12.5" font-family="Liberation Sans" font-size="6" font-weight="700" fill="#6a5acd">A</text><path d="M8 2 V11 M6 9 L8 11.5 L10 9" stroke="#555" stroke-width="0.9" fill="none"/></svg>
<svg style="position:absolute;left:348px;top:45px;overflow:visible" width="20" height="18" viewBox="0 0 20 18">
<rect x="1" y="1" width="18" height="16" fill="#fff" stroke="#9aa3ad" stroke-width="0.6"/>
<rect x="1" y="1" width="18" height="2.3" fill="#3d6fb6"/>
<path d="M10 3.3 V17" stroke="#b6bcc4" stroke-width="0.6"/>
<text x="2.6" y="9.4" font-family="Liberation Sans" font-size="6.3" font-weight="700" fill="#7a5cc0">Z</text>
<text x="2.6" y="15.8" font-family="Liberation Sans" font-size="6.3" font-weight="700" fill="#3f7fd0">A</text>
<text x="11.8" y="9.4" font-family="Liberation Sans" font-size="6.3" font-weight="700" fill="#3f7fd0">A</text>
<text x="11.8" y="15.8" font-family="Liberation Sans" font-size="6.3" font-weight="700" fill="#7a5cc0">Z</text>
</svg>
<svg style="position:absolute;left:381px;top:45px;overflow:visible" width="19" height="18" viewBox="0 0 19 18"><path d="M0.5 0.5 H18 L11 8 V17.5 H8 V8 Z" fill="#6e6e6e"/><path d="M0.5 0.5 H18 L17 2 H1.5 Z" fill="#8a8a8a"/></svg>
<svg style="position:absolute;left:406px;top:45px;overflow:visible" width="11" height="11" viewBox="0 0 11 11"><path d="M0.5 0.5 H9 L5.8 4 V9 H4 V4 Z" fill="#c2c2c2"/><path d="M6 6 L10 10 M10 6 L6 10" stroke="#c9c9c9" stroke-width="0.9"/></svg>
<svg style="position:absolute;left:406px;top:60px;overflow:visible" width="11" height="11" viewBox="0 0 11 11"><path d="M0.5 0.5 H9 L5.8 4 V9 H4 V4 Z" fill="#c2c2c2"/><path d="M6.5 6 A2.5 2.5 0 1 1 7 10" stroke="#c9c9c9" stroke-width="0.9" fill="none"/></svg>
<svg style="position:absolute;left:406px;top:74px;overflow:visible" width="12" height="11" viewBox="0 0 12 11"><path d="M0.5 0.5 H9 L5.8 4 V9 H4 V4 Z" fill="#555"/><path d="M5 10.5 L10.5 4.5" stroke="#3f84c8" stroke-width="1.8"/></svg>
<svg style="position:absolute;left:468px;top:44px;overflow:visible" width="21" height="19" viewBox="0 0 21 19">
<path d="M6 6 Q11 -1 15.5 5" stroke="#2f6aa6" stroke-width="1.6" fill="none"/>
<path d="M13 4.5 L16.5 7.5 L17.3 3 Z" fill="#2f6aa6"/>
<rect x="1" y="7.5" width="10" height="10" fill="#e9f1fb" stroke="#8796a8" stroke-width="0.7"/>
<path d="M2.8 10 H9.5 M2.8 12.3 H9.5 M2.8 14.6 H9.5" stroke="#3e5f86" stroke-width="0.9"/>
<rect x="12" y="9.5" width="8" height="7" fill="#7d7d7d"/>
<path d="M12 12 H20 M12 14.3 H20 M16 9.5 V16.5" stroke="#d0d0d0" stroke-width="0.5"/>
</svg>
<svg style="position:absolute;left:496px;top:44px;overflow:visible" width="12" height="10" viewBox="0 0 12 10"><rect x="0.5" y="0.5" width="10" height="8.5" fill="none" stroke="#c8c8c8" stroke-width="0.8"/><path d="M2 3 H8 M2 5 H6 M2 7 H7" stroke="#d0d0d0" stroke-width="0.7"/></svg>
<svg style="position:absolute;left:496px;top:58px;overflow:visible" width="13" height="12" viewBox="0 0 13 12"><rect x="0.5" y="0.5" width="4" height="11" fill="#6a6a6a"/><rect x="8" y="0.5" width="4" height="11" fill="#6a6a6a"/><path d="M1.2 4 H3.8 M1.2 7.5 H3.8 M8.7 4 H11.3 M8.7 7.5 H11.3" stroke="#ddd" stroke-width="0.7"/><path d="M4.5 6 H8" stroke="#3f84c8" stroke-width="1"/></svg>
<svg style="position:absolute;left:496px;top:73px;overflow:visible" width="12" height="12" viewBox="0 0 12 12"><rect x="0.5" y="3" width="7" height="3" fill="none" stroke="#888" stroke-width="0.7"/><rect x="0.5" y="7.5" width="7" height="3" fill="none" stroke="#888" stroke-width="0.7"/><path d="M6 3.5 L8 5.5 L11.5 0.5" stroke="#555" stroke-width="0.9" fill="none"/><circle cx="8.5" cy="9.5" r="2.3" fill="#e8764a"/></svg>
<svg style="position:absolute;left:518px;top:44px;overflow:visible" width="13" height="10" viewBox="0 0 13 10"><rect x="0.5" y="0.5" width="4" height="9" fill="#8a8a8a"/><path d="M4.5 5 H8" stroke="#c55" stroke-width="0.8"/><rect x="8" y="3" width="4" height="4" fill="none" stroke="#c55" stroke-width="0.8"/></svg>
<svg style="position:absolute;left:518px;top:58px;overflow:visible" width="13" height="12" viewBox="0 0 13 12"><rect x="0.5" y="3" width="5" height="4" fill="none" stroke="#c8c8c8" stroke-width="0.8"/><rect x="7" y="0.5" width="5" height="4" fill="none" stroke="#c8c8c8" stroke-width="0.8"/><rect x="7" y="7" width="5" height="4" fill="none" stroke="#c8c8c8" stroke-width="0.8"/></svg>
<svg style="position:absolute;left:519px;top:73px;overflow:visible" width="11" height="12" viewBox="0 0 11 12"><rect x="0.5" y="0.5" width="10" height="11" rx="1.5" fill="#7bc043"/><path d="M3 2.5 H8 V9.5 H3 Z M3 6 H8 M5.5 2.5 V9.5" stroke="#3d7a1e" stroke-width="0.8" fill="none"/></svg>
<svg style="position:absolute;left:546px;top:45px;overflow:visible" width="21" height="19" viewBox="0 0 21 19">
<rect x="1" y="1" width="16" height="15" fill="#fff" stroke="#8c8c8c" stroke-width="0.8"/>
<rect x="3.5" y="3" width="3.5" height="3" fill="#f4b183"/><rect x="3.5" y="7.5" width="3.5" height="3" fill="#f4b183"/><rect x="3.5" y="12" width="3.5" height="3" fill="#f4b183"/>
<path d="M8.5 1 V16 M12.5 1 V16 M1 6.5 H17 M1 11 H17" stroke="#c0c0c0" stroke-width="0.5"/>
<text x="10" y="18.5" font-family="Liberation Sans" font-size="14" font-weight="700" fill="#2e75b6">?</text>
</svg>
<svg style="position:absolute;left:578px;top:45px;overflow:visible" width="20" height="18" viewBox="0 0 20 18"><rect x="1" y="1" width="18" height="16" fill="none" stroke="#c8c8c8" stroke-width="0.8"/><path d="M3 14 L8 8 L11 11 L17 3" stroke="#bdbdbd" stroke-width="1" fill="none"/><path d="M3 16 Q8 10 12 14" stroke="#c9c9c9" stroke-width="0.8" fill="none"/></svg>
<svg style="position:absolute;left:610px;top:45px;overflow:visible" width="13" height="10" viewBox="0 0 13 10"><rect x="0.5" y="0.5" width="12" height="8.5" fill="#fff" stroke="#8a8a8a" stroke-width="0.7"/><rect x="5" y="1" width="3" height="7.5" fill="#9dc3e6"/><rect x="9" y="1" width="3" height="7.5" fill="#c5b3e6"/><path d="M0.5 3.3 H12.5 M0.5 6 H12.5" stroke="#777" stroke-width="0.5"/></svg>
<svg style="position:absolute;left:610px;top:59px;overflow:visible" width="13" height="11" viewBox="0 0 13 11"><rect x="0.5" y="0.5" width="12" height="9" fill="#fff" stroke="#8a8a8a" stroke-width="0.7"/><rect x="1" y="2" width="4" height="6" fill="#f08080"/><rect x="6.5" y="1" width="2.5" height="8" fill="#9dc3e6"/><path d="M0.5 3.5 H12.5 M0.5 6.5 H12.5" stroke="#777" stroke-width="0.5"/></svg>
<svg style="position:absolute;left:610px;top:74px;overflow:visible" width="13" height="11" viewBox="0 0 13 11"><rect x="0.5" y="0.5" width="12" height="10" fill="#fff" stroke="#7a7a7a" stroke-width="0.8"/><path d="M0.5 3.8 H12.5 M0.5 7.2 H12.5 M5 0.5 V10.5 M8.5 0.5 V10.5" stroke="#7a7a7a" stroke-width="0.7"/></svg>
<svg style="position:absolute;left:667px;top:45px;overflow:visible" width="11" height="10" viewBox="0 0 11 10"><path d="M3 1.5 H7 M5 0 V3 M1 4 H10 M7 4 V9 M7 6.5 H10 M7 9 H10" stroke="#c2c2c2" stroke-width="0.8" fill="none"/></svg>
<svg style="position:absolute;left:667px;top:59px;overflow:visible" width="11" height="10" viewBox="0 0 11 10"><path d="M3 1.5 H7 M1 4 H10 M7 4 V9 M7 6.5 H10 M7 9 H10" stroke="#c2c2c2" stroke-width="0.8" fill="none"/></svg>
<div style="position:absolute;left:5.83px;top:111.12px;line-height:8.5px;white-space:nowrap;font-family:'Liberation Sans', sans-serif;font-size:8.5px;font-weight:400;color:#444;transform:scaleX(1.0988);transform-origin:0 0;-webkit-text-stroke:0.15px currentColor;">A6</div>
<div style="position:absolute;left:139.05px;top:110.35px;line-height:9px;white-space:nowrap;font-family:'Liberation Serif', serif;font-size:9px;font-weight:400;color:#555;font-style:italic">fx</div>
<div style="position:absolute;left:164.15px;top:111.12px;line-height:8.5px;white-space:nowrap;font-family:'Liberation Sans', sans-serif;font-size:8.5px;font-weight:400;color:#333;transform:scaleX(0.8217);transform-origin:0 0;-webkit-text-stroke:0.15px currentColor;">STT</div>
<div style="position:absolute;left:30.91px;top:130.93px;line-height:8.5px;white-space:nowrap;font-family:'Liberation Sans', sans-serif;font-size:8.5px;font-weight:400;color:#3f5f4c;-webkit-text-stroke:0.15px currentColor;">A</div>
<div style="position:absolute;left:85.91px;top:130.93px;line-height:8.5px;white-space:nowrap;font-family:'Liberation Sans', sans-serif;font-size:8.5px;font-weight:400;color:#3f5f4c;-webkit-text-stroke:0.15px currentColor;">B</div>
<div style="position:absolute;left:199.05px;top:130.93px;line-height:8.5px;white-space:nowrap;font-family:'Liberation Sans', sans-serif;font-size:8.5px;font-weight:400;color:#3f5f4c;-webkit-text-stroke:0.15px currentColor;">C</div>
<div style="position:absolute;left:303.05px;top:130.93px;line-height:8.5px;white-space:nowrap;font-family:'Liberation Sans', sans-serif;font-size:8.5px;font-weight:400;color:#3f5f4c;-webkit-text-stroke:0.15px currentColor;">D</div>
<div style="position:absolute;left:387.91px;top:130.93px;line-height:8.5px;white-space:nowrap;font-family:'Liberation Sans', sans-serif;font-size:8.5px;font-weight:400;color:#3f5f4c;-webkit-text-stroke:0.15px currentColor;">E</div>
<div style="position:absolute;left:467.50px;top:130.93px;line-height:8.5px;white-space:nowrap;font-family:'Liberation Sans', sans-serif;font-size:8.5px;font-weight:400;color:#3f5f4c;-webkit-text-stroke:0.15px currentColor;">F</div>
<div style="position:absolute;left:507.64px;top:130.93px;line-height:8.5px;white-space:nowrap;font-family:'Liberation Sans', sans-serif;font-size:8.5px;font-weight:400;color:#3f5f4c;-webkit-text-stroke:0.15px currentColor;">G</div>
<div style="position:absolute;left:548.40px;top:130.93px;line-height:8.5px;white-space:nowrap;font-family:'Liberation Sans', sans-serif;font-size:8.5px;font-weight:400;color:#3f5f4c;-webkit-text-stroke:0.15px currentColor;">H</div>
<div style="position:absolute;left:591.19px;top:130.93px;line-height:8.5px;white-space:nowrap;font-family:'Liberation Sans', sans-serif;font-size:8.5px;font-weight:400;color:#3f5f4c;-webkit-text-stroke:0.15px currentColor;">I</div>
<div style="position:absolute;left:630.98px;top:130.93px;line-height:8.5px;white-space:nowrap;font-family:'Liberation Sans', sans-serif;font-size:8.5px;font-weight:400;color:#3f5f4c;-webkit-text-stroke:0.15px currentColor;">J</div>
<div style="position:absolute;left:670.61px;top:130.93px;line-height:8.5px;white-space:nowrap;font-family:'Liberation Sans', sans-serif;font-size:8.5px;font-weight:400;color:#3f5f4c;-webkit-text-stroke:0.15px currentColor;">K</div>
<div style="position:absolute;left:711.78px;top:130.93px;line-height:8.5px;white-space:nowrap;font-family:'Liberation Sans', sans-serif;font-size:8.5px;font-weight:400;color:#3f5f4c;-webkit-text-stroke:0.15px currentColor;">L</div>
<div style="position:absolute;left:751.50px;top:130.93px;line-height:8.5px;white-space:nowrap;font-family:'Liberation Sans', sans-serif;font-size:8.5px;font-weight:400;color:#3f5f4c;-webkit-text-stroke:0.15px currentColor;">M</div>
<div style="position:absolute;left:4.63px;top:157.12px;line-height:8.5px;white-space:nowrap;font-family:'Liberation Sans', sans-serif;font-size:8.5px;font-weight:400;color:#444;-webkit-text-stroke:0.15px currentColor;">4</div>
<div style="position:absolute;left:4.63px;top:181.12px;line-height:8.5px;white-space:nowrap;font-family:'Liberation Sans', sans-serif;font-size:8.5px;font-weight:400;color:#444;-webkit-text-stroke:0.15px currentColor;">5</div>
<div style="position:absolute;left:4.63px;top:202.12px;line-height:8.5px;white-space:nowrap;font-family:'Liberation Sans', sans-serif;font-size:8.5px;font-weight:400;color:#3a8058;-webkit-text-stroke:0.15px currentColor;">6</div>
<div style="position:absolute;left:4.63px;top:228.12px;line-height:8.5px;white-space:nowrap;font-family:'Liberation Sans', sans-serif;font-size:8.5px;font-weight:400;color:#3a8058;-webkit-text-stroke:0.15px currentColor;">7</div>
<div style="position:absolute;left:4.63px;top:253.62px;line-height:8.5px;white-space:nowrap;font-family:'Liberation Sans', sans-serif;font-size:8.5px;font-weight:400;color:#3a8058;-webkit-text-stroke:0.15px currentColor;">8</div>
<div style="position:absolute;left:4.63px;top:278.62px;line-height:8.5px;white-space:nowrap;font-family:'Liberation Sans', sans-serif;font-size:8.5px;font-weight:400;color:#3a8058;-webkit-text-stroke:0.15px currentColor;">9</div>
<div style="position:absolute;left:1.97px;top:304.12px;line-height:8.5px;white-space:nowrap;font-family:'Liberation Sans', sans-serif;font-size:8.5px;font-weight:400;color:#3a8058;-webkit-text-stroke:0.15px currentColor;">10</div>
<div style="position:absolute;left:2.29px;top:324.12px;line-height:8.5px;white-space:nowrap;font-family:'Liberation Sans', sans-serif;font-size:8.5px;font-weight:400;color:#3a8058;-webkit-text-stroke:0.15px currentColor;">11</div>
<div style="position:absolute;left:1.97px;top:349.12px;line-height:8.5px;white-space:nowrap;font-family:'Liberation Sans', sans-serif;font-size:8.5px;font-weight:400;color:#3a8058;-webkit-text-stroke:0.15px currentColor;">12</div>
<div style="position:absolute;left:1.97px;top:374.12px;line-height:8.5px;white-space:nowrap;font-family:'Liberation Sans', sans-serif;font-size:8.5px;font-weight:400;color:#3a8058;-webkit-text-stroke:0.15px currentColor;">13</div>
<div style="position:absolute;left:1.97px;top:398.43px;line-height:8.5px;white-space:nowrap;font-family:'Liberation Sans', sans-serif;font-size:8.5px;font-weight:400;color:#3a8058;-webkit-text-stroke:0.15px currentColor;">14</div>
<div style="position:absolute;left:1.97px;top:423.43px;line-height:8.5px;white-space:nowrap;font-family:'Liberation Sans', sans-serif;font-size:8.5px;font-weight:400;color:#3a8058;-webkit-text-stroke:0.15px currentColor;">15</div>
<div style="position:absolute;left:1.97px;top:448.62px;line-height:8.5px;white-space:nowrap;font-family:'Liberation Sans', sans-serif;font-size:8.5px;font-weight:400;color:#3a8058;-webkit-text-stroke:0.15px currentColor;">16</div>
<div style="position:absolute;left:55.63px;top:148.14px;line-height:13.2px;white-space:nowrap;font-family:'Liberation Serif', serif;font-size:13.2px;font-weight:700;color:#a0431b;transform:scaleX(1.0157);transform-origin:0 0;">Ngành đào tạo: Lịch sử</div>
<div style="position:absolute;left:55.63px;top:171.94px;line-height:13.2px;white-space:nowrap;font-family:'Liberation Serif', serif;font-size:13.2px;font-weight:700;color:#a0431b;transform:scaleX(1.0098);transform-origin:0 0;">Chuyên ngành: Khảo cổ học</div>
<div style="position:absolute;left:26.69px;top:197.85px;line-height:9px;white-space:nowrap;font-family:'Liberation Serif', serif;font-size:9px;font-weight:700;color:#111;transform:scaleX(0.9060);transform-origin:0 0;">STT</div>
<div style="position:absolute;left:75.93px;top:197.85px;line-height:9px;white-space:nowrap;font-family:'Liberation Serif', serif;font-size:9px;font-weight:700;color:#111;transform:scaleX(1.0367);transform-origin:0 0;">MSSV</div>
<div style="position:absolute;left:193.00px;top:197.58px;line-height:9.5px;white-space:nowrap;font-family:'Liberation Serif', serif;font-size:9.5px;font-weight:700;color:#111;transform:scaleX(1.0527);transform-origin:0 0;">Họ tên sinh viên</div>
<div style="position:absolute;left:375.32px;top:197.58px;line-height:9.5px;white-space:nowrap;font-family:'Liberation Serif', serif;font-size:9.5px;font-weight:700;color:#111;transform:scaleX(1.0084);transform-origin:0 0;">Ghi chú</div>
<div style="position:absolute;left:31.55px;top:220.17px;line-height:10.6px;white-space:nowrap;font-family:'Liberation Serif', serif;font-size:10.6px;font-weight:400;color:#1a1a1a;">1</div>
<div style="position:absolute;left:55.16px;top:220.78px;line-height:9.5px;white-space:nowrap;font-family:'Liberation Serif', serif;font-size:9.5px;font-weight:400;color:#1a1a1a;transform:scaleX(0.9345);transform-origin:0 0;">1956040045</div>
<div style="position:absolute;left:125.53px;top:220.78px;line-height:9.5px;white-space:nowrap;font-family:'Liberation Serif', serif;font-size:9.5px;font-weight:400;color:#1a1a1a;">Trần Quốc</div>
<div style="position:absolute;left:282.02px;top:220.78px;line-height:9.5px;white-space:nowrap;font-family:'Liberation Serif', serif;font-size:9.5px;font-weight:400;color:#1a1a1a;">Dũng</div>
<div style="position:absolute;left:31.55px;top:245.92px;line-height:10.6px;white-space:nowrap;font-family:'Liberation Serif', serif;font-size:10.6px;font-weight:400;color:#1a1a1a;">2</div>
<div style="position:absolute;left:55.16px;top:246.53px;line-height:9.5px;white-space:nowrap;font-family:'Liberation Serif', serif;font-size:9.5px;font-weight:400;color:#1a1a1a;transform:scaleX(0.9345);transform-origin:0 0;">2156040058</div>
<div style="position:absolute;left:125.53px;top:246.53px;line-height:9.5px;white-space:nowrap;font-family:'Liberation Serif', serif;font-size:9.5px;font-weight:400;color:#1a1a1a;">Trịnh Gia</div>
<div style="position:absolute;left:282.02px;top:246.53px;line-height:9.5px;white-space:nowrap;font-family:'Liberation Serif', serif;font-size:9.5px;font-weight:400;color:#1a1a1a;">Bảo</div>
<div style="position:absolute;left:31.55px;top:271.17px;line-height:10.6px;white-space:nowrap;font-family:'Liberation Serif', serif;font-size:10.6px;font-weight:400;color:#1a1a1a;">3</div>
<div style="position:absolute;left:55.16px;top:271.77px;line-height:9.5px;white-space:nowrap;font-family:'Liberation Serif', serif;font-size:9.5px;font-weight:400;color:#1a1a1a;transform:scaleX(0.9345);transform-origin:0 0;">2156040107</div>
<div style="position:absolute;left:125.53px;top:271.77px;line-height:9.5px;white-space:nowrap;font-family:'Liberation Serif', serif;font-size:9.5px;font-weight:400;color:#1a1a1a;">Lê Phạm Ý</div>
<div style="position:absolute;left:282.02px;top:271.77px;line-height:9.5px;white-space:nowrap;font-family:'Liberation Serif', serif;font-size:9.5px;font-weight:400;color:#1a1a1a;">Nhã</div>
<div style="position:absolute;left:31.55px;top:296.42px;line-height:10.6px;white-space:nowrap;font-family:'Liberation Serif', serif;font-size:10.6px;font-weight:400;color:#1a1a1a;">4</div>
<div style="position:absolute;left:55.16px;top:297.02px;line-height:9.5px;white-space:nowrap;font-family:'Liberation Serif', serif;font-size:9.5px;font-weight:400;color:#1a1a1a;transform:scaleX(0.9345);transform-origin:0 0;">2156040132</div>
<div style="position:absolute;left:125.53px;top:297.02px;line-height:9.5px;white-space:nowrap;font-family:'Liberation Serif', serif;font-size:9.5px;font-weight:400;color:#1a1a1a;">Phan Thị Cẩm</div>
<div style="position:absolute;left:282.02px;top:297.02px;line-height:9.5px;white-space:nowrap;font-family:'Liberation Serif', serif;font-size:9.5px;font-weight:400;color:#1a1a1a;">Tiên</div>
<div style="position:absolute;left:31.55px;top:319.17px;line-height:10.6px;white-space:nowrap;font-family:'Liberation Serif', serif;font-size:10.6px;font-weight:400;color:#1a1a1a;">5</div>
<div style="position:absolute;left:55.16px;top:319.77px;line-height:9.5px;white-space:nowrap;font-family:'Liberation Serif', serif;font-size:9.5px;font-weight:400;color:#1a1a1a;transform:scaleX(0.9345);transform-origin:0 0;">2156040157</div>
<div style="position:absolute;left:125.53px;top:319.77px;line-height:9.5px;white-space:nowrap;font-family:'Liberation Serif', serif;font-size:9.5px;font-weight:400;color:#1a1a1a;">Lê Phạm Ý</div>
<div style="position:absolute;left:282.02px;top:319.77px;line-height:9.5px;white-space:nowrap;font-family:'Liberation Serif', serif;font-size:9.5px;font-weight:400;color:#1a1a1a;">Nhã</div>
<div style="position:absolute;left:31.55px;top:341.67px;line-height:10.6px;white-space:nowrap;font-family:'Liberation Serif', serif;font-size:10.6px;font-weight:400;color:#1a1a1a;">6</div>
<div style="position:absolute;left:55.16px;top:342.27px;line-height:9.5px;white-space:nowrap;font-family:'Liberation Serif', serif;font-size:9.5px;font-weight:400;color:#1a1a1a;transform:scaleX(0.9345);transform-origin:0 0;">2156040182</div>
<div style="position:absolute;left:125.53px;top:342.27px;line-height:9.5px;white-space:nowrap;font-family:'Liberation Serif', serif;font-size:9.5px;font-weight:400;color:#1a1a1a;">Phan Thị Cẩm</div>
<div style="position:absolute;left:282.02px;top:342.27px;line-height:9.5px;white-space:nowrap;font-family:'Liberation Serif', serif;font-size:9.5px;font-weight:400;color:#1a1a1a;">Tiên</div>
<div style="position:absolute;left:31.55px;top:366.67px;line-height:10.6px;white-space:nowrap;font-family:'Liberation Serif', serif;font-size:10.6px;font-weight:400;color:#1a1a1a;">7</div>
<div style="position:absolute;left:55.16px;top:367.27px;line-height:9.5px;white-space:nowrap;font-family:'Liberation Serif', serif;font-size:9.5px;font-weight:400;color:#1a1a1a;transform:scaleX(0.9345);transform-origin:0 0;">2156040207</div>
<div style="position:absolute;left:125.53px;top:367.27px;line-height:9.5px;white-space:nowrap;font-family:'Liberation Serif', serif;font-size:9.5px;font-weight:400;color:#1a1a1a;">Lê Phạm Ý</div>
<div style="position:absolute;left:282.02px;top:367.27px;line-height:9.5px;white-space:nowrap;font-family:'Liberation Serif', serif;font-size:9.5px;font-weight:400;color:#1a1a1a;">Nhã</div>
<div style="position:absolute;left:31.55px;top:391.32px;line-height:10.6px;white-space:nowrap;font-family:'Liberation Serif', serif;font-size:10.6px;font-weight:400;color:#1a1a1a;">7</div>
<div style="position:absolute;left:55.16px;top:391.92px;line-height:9.5px;white-space:nowrap;font-family:'Liberation Serif', serif;font-size:9.5px;font-weight:400;color:#1a1a1a;transform:scaleX(0.9345);transform-origin:0 0;">2156040059</div>
<div style="position:absolute;left:125.53px;top:391.92px;line-height:9.5px;white-space:nowrap;font-family:'Liberation Serif', serif;font-size:9.5px;font-weight:400;color:#1a1a1a;">Huỳnh Thúy</div>
<div style="position:absolute;left:282.02px;top:391.92px;line-height:9.5px;white-space:nowrap;font-family:'Liberation Serif', serif;font-size:9.5px;font-weight:400;color:#1a1a1a;">Bình</div>
<div style="position:absolute;left:31.55px;top:415.97px;line-height:10.6px;white-space:nowrap;font-family:'Liberation Serif', serif;font-size:10.6px;font-weight:400;color:#1a1a1a;">8</div>
<div style="position:absolute;left:55.16px;top:416.57px;line-height:9.5px;white-space:nowrap;font-family:'Liberation Serif', serif;font-size:9.5px;font-weight:400;color:#1a1a1a;transform:scaleX(0.9345);transform-origin:0 0;">2156040064</div>
<div style="position:absolute;left:125.53px;top:416.57px;line-height:9.5px;white-space:nowrap;font-family:'Liberation Serif', serif;font-size:9.5px;font-weight:400;color:#1a1a1a;">Phạm Thị Thúy</div>
<div style="position:absolute;left:282.02px;top:416.57px;line-height:9.5px;white-space:nowrap;font-family:'Liberation Serif', serif;font-size:9.5px;font-weight:400;color:#1a1a1a;">Diệu</div>
<div style="position:absolute;left:31.55px;top:441.07px;line-height:10.6px;white-space:nowrap;font-family:'Liberation Serif', serif;font-size:10.6px;font-weight:400;color:#1a1a1a;">9</div>
<div style="position:absolute;left:55.16px;top:441.67px;line-height:9.5px;white-space:nowrap;font-family:'Liberation Serif', serif;font-size:9.5px;font-weight:400;color:#1a1a1a;transform:scaleX(0.9345);transform-origin:0 0;">2156040066</div>
<div style="position:absolute;left:125.53px;top:441.67px;line-height:9.5px;white-space:nowrap;font-family:'Liberation Serif', serif;font-size:9.5px;font-weight:400;color:#1a1a1a;">Nguyễn Thảo</div>
<div style="position:absolute;left:282.02px;top:441.67px;line-height:9.5px;white-space:nowrap;font-family:'Liberation Serif', serif;font-size:9.5px;font-weight:400;color:#1a1a1a;">Dương</div>
<div style="position:absolute;left:405px;top:282.5px;width:276px;height:190px;background:#f0f0f0;border-radius:7px;box-shadow:0 2px 14px rgba(0,0,0,0.28);border:0"></div>
<div style="position:absolute;left:408px;top:317px;width:269px;height:27px;background:#f2f2f2;border-top:1px solid #fafafa;border-right:1px solid #e2e2e2;border-bottom:1px solid #fafafa"></div>
<svg style="position:absolute;left:662.5px;top:287.5px;overflow:visible" width="8" height="8" viewBox="0 0 8 8"><path d="M0.5 0.5 L7.5 7.5 M7.5 0.5 L0.5 7.5" stroke="#444" stroke-width="0.85"/></svg>
<div style="position:absolute;left:416.5px;top:322.5px;width:47.5px;height:11px;background:#fdfdfd;border:1.6px solid #6a9bd1;border-radius:3px"></div>
<svg style="position:absolute;left:420.5px;top:324.5px;overflow:visible" width="12" height="11" viewBox="0 0 12 11"><path d="M2.5 0.8 Q4.5 2 2.2 3.6 Q0.5 5 2.6 6.3 Q4.6 7.6 2 9.6" stroke="#2e9a3e" stroke-width="1.3" fill="none"/><path d="M5.5 1.5 H10.5 M5.5 4 H10.5 M5.5 6.5 H10.5 M5.5 9 H10.5" stroke="#6f8fbf" stroke-width="1.1"/></svg>
<div style="position:absolute;left:455px;top:334.3px;width:5.5px;height:0.7px;background:#444;"></div>
<div style="position:absolute;left:475.8px;top:323px;width:59.5px;height:12.5px;background:#fbfbfb;border:0.8px solid #dcdcdc;border-radius:3px"></div>
<svg style="position:absolute;left:480px;top:325px;overflow:visible" width="12" height="11" viewBox="0 0 12 11"><path d="M0.5 1.5 H3 M0.5 4 H3 M0.5 6.5 H3 M0.5 9 H3" stroke="#7d93b8" stroke-width="1.1"/><path d="M4.5 1.5 H10 M4.5 4 H10 M4.5 6.5 H10 M4.5 9 H10" stroke="#7d93b8" stroke-width="1.1"/></svg>
<div style="position:absolute;left:493.2px;top:334.3px;width:5px;height:0.7px;background:#444;"></div>
<div style="position:absolute;left:588.5px;top:322.5px;width:6px;height:6px;background:#fff;border:1px solid #555;border-radius:1.5px"></div>
<div style="position:absolute;left:601px;top:330.8px;width:7px;height:0.7px;background:#444;"></div>
<div style="position:absolute;left:408.5px;top:349px;width:267px;height:79.5px;background:#fff;border:1px solid #c6c6c6"></div>
<div style="position:absolute;left:411.3px;top:365.5px;width:7.6px;height:7.6px;background:#0f5fb8;border-radius:1.5px"></div>
<svg style="position:absolute;left:412.3px;top:366.8px;overflow:visible" width="6" height="5" viewBox="0 0 6 5"><path d="M0.8 2.5 L2.3 4 L5.2 0.8" stroke="#fff" stroke-width="0.9" fill="none"/></svg>
<div style="position:absolute;left:411.3px;top:376.8px;width:7.6px;height:7.6px;background:#0f5fb8;border-radius:1.5px"></div>
<svg style="position:absolute;left:412.3px;top:378.1px;overflow:visible" width="6" height="5" viewBox="0 0 6 5"><path d="M0.8 2.5 L2.3 4 L5.2 0.8" stroke="#fff" stroke-width="0.9" fill="none"/></svg>
<div style="position:absolute;left:411.3px;top:388.1px;width:7.6px;height:7.6px;background:#0f5fb8;border-radius:1.5px"></div>
<svg style="position:absolute;left:412.3px;top:389.40000000000003px;overflow:visible" width="6" height="5" viewBox="0 0 6 5"><path d="M0.8 2.5 L2.3 4 L5.2 0.8" stroke="#fff" stroke-width="0.9" fill="none"/></svg>
<div style="position:absolute;left:411.3px;top:399.4px;width:7.6px;height:7.6px;background:#0f5fb8;border-radius:1.5px"></div>
<svg style="position:absolute;left:412.3px;top:400.70000000000005px;overflow:visible" width="6" height="5" viewBox="0 0 6 5"><path d="M0.8 2.5 L2.3 4 L5.2 0.8" stroke="#fff" stroke-width="0.9" fill="none"/></svg>
<div style="position:absolute;left:411.3px;top:410.7px;width:7.6px;height:7.6px;background:#0f5fb8;border-radius:1.5px"></div>
<svg style="position:absolute;left:412.3px;top:412.0px;overflow:visible" width="6" height="5" viewBox="0 0 6 5"><path d="M0.8 2.5 L2.3 4 L5.2 0.8" stroke="#fff" stroke-width="0.9" fill="none"/></svg>
<div style="position:absolute;left:577px;top:438.5px;width:44px;height:20px;background:#fbfbfb;border:0.8px solid #d6d6d6;border-radius:3px"></div>
<div style="position:absolute;left:631px;top:438.5px;width:44.5px;height:20px;background:#fbfbfb;border:0.8px solid #d6d6d6;border-radius:3px"></div>
<div style="position:absolute;left:410.13px;top:288.37px;line-height:8.6px;white-space:nowrap;font-family:'Liberation Sans', sans-serif;font-size:8.6px;font-weight:400;color:#2b2b2b;transform:scaleX(0.8689);transform-origin:0 0;-webkit-text-stroke:0.15px currentColor;">Remove Duplicates</div>
<div style="position:absolute;left:634.61px;top:287.57px;line-height:8.6px;white-space:nowrap;font-family:'Liberation Sans', sans-serif;font-size:8.6px;font-weight:400;color:#333;-webkit-text-stroke:0.15px currentColor;">?</div>
<div style="position:absolute;left:409.63px;top:307.40px;line-height:8px;white-space:nowrap;font-family:'Liberation Sans', sans-serif;font-size:8px;font-weight:400;color:#222;transform:scaleX(0.9208);transform-origin:0 0;-webkit-text-stroke:0.15px currentColor;">To delete duplicate values, select one or more columns that contain duplicates.</div>
<div style="position:absolute;left:433.63px;top:326.54px;line-height:8.3px;white-space:nowrap;font-family:'Liberation Sans', sans-serif;font-size:8.3px;font-weight:400;color:#222;transform:scaleX(0.8856);transform-origin:0 0;-webkit-text-stroke:0.15px currentColor;">Select All</div>
<div style="position:absolute;left:492.82px;top:326.54px;line-height:8.3px;white-space:nowrap;font-family:'Liberation Sans', sans-serif;font-size:8.3px;font-weight:400;color:#222;transform:scaleX(0.9170);transform-origin:0 0;-webkit-text-stroke:0.15px currentColor;">Unselect All</div>
<div style="position:absolute;left:600.64px;top:322.94px;line-height:8.3px;white-space:nowrap;font-family:'Liberation Sans', sans-serif;font-size:8.3px;font-weight:400;color:#222;transform:scaleX(0.8741);transform-origin:0 0;-webkit-text-stroke:0.15px currentColor;">My data has headers</div>
<div style="position:absolute;left:412.45px;top:352.89px;line-height:8.2px;white-space:nowrap;font-family:'Liberation Sans', sans-serif;font-size:8.2px;font-weight:400;color:#222;transform:scaleX(0.8573);transform-origin:0 0;-webkit-text-stroke:0.15px currentColor;">Columns</div>
<div style="position:absolute;left:423.63px;top:365.59px;line-height:8.2px;white-space:nowrap;font-family:'Liberation Sans', sans-serif;font-size:8.2px;font-weight:400;color:#222;transform:scaleX(0.9083);transform-origin:0 0;-webkit-text-stroke:0.15px currentColor;">Column A</div>
<div style="position:absolute;left:423.63px;top:376.89px;line-height:8.2px;white-space:nowrap;font-family:'Liberation Sans', sans-serif;font-size:8.2px;font-weight:400;color:#222;transform:scaleX(0.8966);transform-origin:0 0;-webkit-text-stroke:0.15px currentColor;">Column B</div>
<div style="position:absolute;left:423.64px;top:388.19px;line-height:8.2px;white-space:nowrap;font-family:'Liberation Sans', sans-serif;font-size:8.2px;font-weight:400;color:#222;transform:scaleX(0.8852);transform-origin:0 0;-webkit-text-stroke:0.15px currentColor;">Column C</div>
<div style="position:absolute;left:423.63px;top:399.49px;line-height:8.2px;white-space:nowrap;font-family:'Liberation Sans', sans-serif;font-size:8.2px;font-weight:400;color:#222;transform:scaleX(0.8966);transform-origin:0 0;-webkit-text-stroke:0.15px currentColor;">Column E</div>
<div style="position:absolute;left:423.63px;top:410.79px;line-height:8.2px;white-space:nowrap;font-family:'Liberation Sans', sans-serif;font-size:8.2px;font-weight:400;color:#222;transform:scaleX(0.9083);transform-origin:0 0;-webkit-text-stroke:0.15px currentColor;">Column F</div>
<div style="position:absolute;left:593.50px;top:442.74px;line-height:8.3px;white-space:nowrap;font-family:'Liberation Sans', sans-serif;font-size:8.3px;font-weight:400;color:#222;-webkit-text-stroke:0.15px currentColor;">OK</div>
<div style="position:absolute;left:642.13px;top:442.74px;line-height:8.3px;white-space:nowrap;font-family:'Liberation Sans', sans-serif;font-size:8.3px;font-weight:400;color:#222;transform:scaleX(0.8801);transform-origin:0 0;-webkit-text-stroke:0.15px currentColor;">Cancel</div>




<div style="position:absolute;left:170px;top:13px;width:156px;height:82.5px;border:4px solid #f0262b"></div>
<div style="position:absolute;left:463px;top:36px;width:64px;height:59px;border:4px solid #f0262b"></div>
<div style="position:absolute;left:400px;top:280px;width:91px;height:14px;border:4px solid #f0262b"></div>
</body></html>
